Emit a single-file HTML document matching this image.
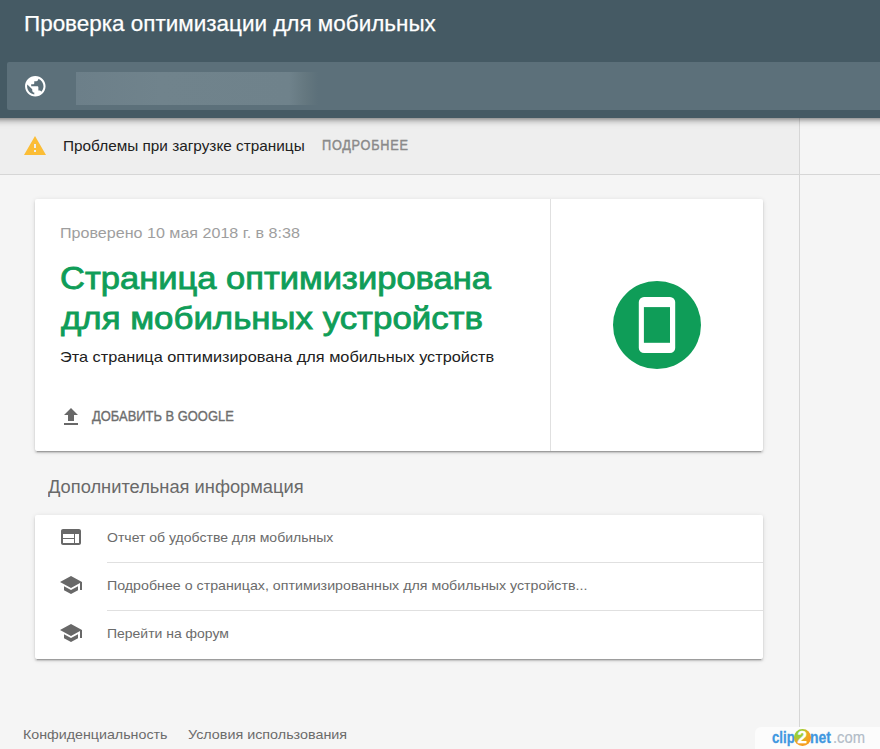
<!DOCTYPE html>
<html lang="ru">
<head>
<meta charset="utf-8">
<title>Проверка оптимизации для мобильных</title>
<style>
*{box-sizing:border-box;margin:0;padding:0}
html,body{width:880px;height:749px;overflow:hidden;background:#f5f5f5;font-family:"Liberation Sans",sans-serif;color:#212121}
body{position:relative}
.abs{position:absolute;white-space:nowrap}
.t{transform-origin:0 0}
#hdr{left:-20px;top:0;width:920px;height:118px;background:#455a64;box-shadow:0 4px 5px 0 rgba(0,0,0,.14),0 1px 10px 0 rgba(0,0,0,.12),0 2px 4px -1px rgba(0,0,0,.3)}
#search{left:7px;top:62px;width:880px;height:48px;background:#5c707a;border-radius:2px}
#blur{left:76px;top:72px;width:242px;height:33px;background:linear-gradient(to right,#6c7f89 0,#70838c 35%,#6f828b 88%,#64777f 95%,#5c707a 100%)}
#warnbar{left:0;top:118px;width:799px;height:56px;background:#eeeeee}
#hline{left:0;top:174px;width:880px;height:1px;background:#d6d6d6}
#vline{left:799px;top:118px;width:1px;height:640px;background:#d6d6d6}
.card{background:#fff;border-radius:2px;box-shadow:0 2px 2px 0 rgba(0,0,0,.14),0 3px 1px -2px rgba(0,0,0,.2),0 1px 5px 0 rgba(0,0,0,.12)}
#card1{left:35px;top:199px;width:728px;height:252px}
#c1div{left:550px;top:199px;width:1px;height:252px;background:#e0e0e0}
#circle{left:613px;top:281px;width:88px;height:88px;border-radius:50%;background:#0f9d58}
#card2{left:35px;top:515px;width:728px;height:144px}
.rowline{left:107px;width:656px;height:1px;background:#e0e0e0}
#wm{left:755px;top:727px;width:130px;height:30px;background:#fcfcfc;border-top-left-radius:6px}
.wmt{font-size:16.5px;line-height:20px;font-weight:bold;color:#3f97e0;top:727px;-webkit-text-stroke:.3px #3f97e0}
#ball{left:794.2px;top:729.4px;width:16.6px;height:16.6px;border-radius:50%;background:radial-gradient(circle at 28% 22%,#8ed03a 0,#a4cc35 28%,#f4a321 55%,#f7931e 100%)}
#two{left:797.6px;top:728px;font-size:17px;line-height:20px;font-weight:bold;color:#fff;-webkit-text-stroke:.4px #fff}
</style>
</head>
<body>
<div class="abs" id="warnbar"></div>
<div class="abs" id="hline"></div>
<div class="abs" id="vline"></div>
<div class="abs" id="hdr"></div>
<div class="abs" id="search"></div>
<div class="abs" id="blur"></div>
<svg class="abs" id="globe" style="left:22.6px;top:73.7px" width="24.6" height="24.6" viewBox="0 0 24 24"><path fill="#fff" d="M12 2C6.48 2 2 6.48 2 12s4.48 10 10 10 10-4.480 10-10S17.52 2 12 2zm-1 17.930c-3.950-.490-7-3.850-7-7.930 0-.620.080-1.210.210-1.790L9 15v1c0 1.100.9 2 2 2v1.930zm6.900-2.540c-.260-.810-1-1.390-1.900-1.390h-1v-3c0-.550-.450-1-1-1H8v-2h2c.550 0 1-.450 1-1V7h2c1.100 0 2-.9 2-2v-.410c2.930 1.190 5 4.060 5 7.410 0 2.080-.8 3.970-2.100 5.390z"/></svg>
<svg class="abs" id="warn" style="left:23px;top:134px" width="24" height="24" viewBox="0 0 24 24"><path fill="#fbbd36" d="M1 21h22L12 2 1 21zm12-3h-2v-2h2v2zm0-4h-2v-4h2v4z"/></svg>

<div class="abs card" id="card1"></div>
<div class="abs" id="c1div"></div>
<svg class="abs" id="upl" style="left:59.2px;top:404.6px" width="24" height="24" viewBox="0 0 24 24"><path fill="#686868" d="M5 20h14v-2H5v2zM5 10h4v6h6v-6h4l-7-7-7 7z"/></svg>
<div class="abs" id="circle"></div>
<svg class="abs" id="phone" style="left:613px;top:281px" width="88" height="88" viewBox="0 0 88 88"><rect x="25.8" y="15.9" width="36.4" height="56.2" rx="5.2" fill="#fff"/><rect x="30.9" y="26.1" width="26.1" height="35.7" fill="#0f9d58"/></svg>

<div class="abs card" id="card2"></div>
<div class="abs rowline" style="top:562px"></div>
<div class="abs rowline" style="top:610px"></div>
<svg class="abs" style="left:59px;top:525px" width="24" height="24" viewBox="0 0 24 24"><path fill="#686868" d="M20 4H4c-1.100 0-1.990.9-1.990 2L2 18c0 1.100.9 2 2 2h16c1.100 0 2-.9 2-2V6c0-1.100-.9-2-2-2zm-5 14H4v-4h11v4zm0-5H4V9h11v4zm5 5h-4V9h4v9z"/></svg>
<svg class="abs" style="left:59px;top:573px" width="24" height="24" viewBox="0 0 24 24"><path fill="#686868" d="M5 13.180v4L12 21l7-3.820v-4L12 17l-7-3.820zM12 3L1 9l11 6 9-4.910V17h2V9L12 3z"/></svg>
<svg class="abs" style="left:59px;top:621px" width="24" height="24" viewBox="0 0 24 24"><path fill="#686868" d="M5 13.180v4L12 21l7-3.820v-4L12 17l-7-3.820zM12 3L1 9l11 6 9-4.910V17h2V9L12 3z"/></svg>

<div class="abs t" id="title" style="left:23.60px;top:10px;font-size:22.5px;line-height:27px;color:#ffffff;-webkit-text-stroke:0.25px #ffffff;transform:scaleX(0.9981);">Проверка оптимизации для мобильных</div>
<div class="abs t" id="warntext" style="left:63.38px;top:137px;font-size:15px;line-height:18px;color:#212121;transform:scaleX(1.0226);">Проблемы при загрузке страницы</div>
<div class="abs t" id="more" style="left:322.05px;top:137px;font-size:14px;line-height:17px;color:#8a8a8a;letter-spacing:.8px;-webkit-text-stroke:0.45px #8a8a8a;transform:scaleX(0.9096);">ПОДРОБНЕЕ</div>
<div class="abs t" id="checked" style="left:59.57px;top:223px;font-size:15.5px;line-height:19px;color:#9e9e9e;transform:scaleX(1.0378);">Проверено 10 мая 2018 г. в 8:38</div>
<div class="abs t" id="big1" style="left:59.71px;top:259px;font-size:32px;line-height:38px;color:#0f9d58;-webkit-text-stroke:0.85px #0f9d58;transform:scaleX(1.0789);">Страница оптимизирована</div>
<div class="abs t" id="big2" style="left:61.04px;top:299px;font-size:32px;line-height:38px;color:#0f9d58;-webkit-text-stroke:0.85px #0f9d58;transform:scaleX(1.0881);">для мобильных устройств</div>
<div class="abs t" id="sub" style="left:59.75px;top:348px;font-size:15px;line-height:18px;color:#212121;transform:scaleX(1.0857);">Эта страница оптимизирована для мобильных устройств</div>
<div class="abs t" id="add" style="left:91.96px;top:408px;font-size:14px;line-height:17px;color:#6e6e6e;-webkit-text-stroke:0.35px #6e6e6e;transform:scaleX(0.9234);">ДОБАВИТЬ В GOOGLE</div>
<div class="abs t" id="h2" style="left:48.02px;top:477px;font-size:17.5px;line-height:21px;color:#696969;transform:scaleX(1.0449);">Дополнительная информация</div>
<div class="abs t" id="row1" style="left:106.98px;top:530px;font-size:13.5px;line-height:16px;color:#6b6b6b;transform:scaleX(1.0390);">Отчет об удобстве для мобильных</div>
<div class="abs t" id="row2" style="left:106.97px;top:578px;font-size:13.5px;line-height:16px;color:#6b6b6b;transform:scaleX(1.0532);">Подробнее о страницах, оптимизированных для мобильных устройств...</div>
<div class="abs t" id="row3" style="left:107.19px;top:626px;font-size:13.5px;line-height:16px;color:#6b6b6b;transform:scaleX(1.0343);">Перейти на форум</div>
<div class="abs t" id="foot1" style="left:23.49px;top:727px;font-size:13.5px;line-height:16px;color:#6b6b6b;transform:scaleX(1.0548);">Конфиденциальность</div>
<div class="abs t" id="foot2" style="left:188.00px;top:727px;font-size:13.5px;line-height:16px;color:#6b6b6b;transform:scaleX(1.0618);">Условия использования</div>
<div class="abs" id="wm"></div>
<div class="abs t wmt" id="wm1" style="left:772.2px;transform:scaleX(.80)">clip</div>
<div class="abs t wmt" id="wm2" style="left:809.5px;transform:scaleX(.845)">net</div>
<div class="abs t wmt" id="wm3" style="left:833.0px;transform:scaleX(.895);font-weight:normal;color:#b3bcc8;-webkit-text-stroke:.2px #b3bcc8">.com</div>
<div class="abs" id="ball"></div>
<div class="abs t" id="two" style="transform:scaleX(1.0)">2</div>
</body>
</html>
